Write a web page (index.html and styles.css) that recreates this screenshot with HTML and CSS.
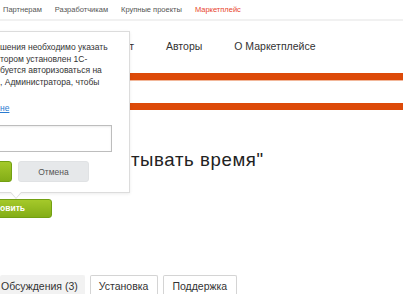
FILE: index.html
```html
<!DOCTYPE html>
<html lang="ru">
<head>
    <meta charset="UTF-8">
    <meta name="viewport" content="width=device-width, initial-scale=1.0">
    <title>Маркетплейс</title>
    <link rel="stylesheet" href="styles.css">
</head>
<body>
    <div class="topbar">
        <a class="topbar-link" href="#">Партнерам</a>
        <a class="topbar-link" href="#">Разработчикам</a>
        <a class="topbar-link" href="#">Крупные проекты</a>
        <a class="topbar-link active" href="#">Маркетплейс</a>
    </div>

    <div class="page">
        <nav class="menu">
            <a class="menu-item menu-item-cut" href="#">Продукт</a>
            <a class="menu-item" href="#">Авторы</a>
            <a class="menu-item" href="#">О Маркетплейсе</a>
        </nav>
        <div class="stripe"></div>
        <div class="stripe stripe-second"></div>

        <h1 class="app-title">тывать время"</h1>

        <div class="install-row">
            <button class="btn-green btn-install">овить</button>
        </div>

        <div class="tabs">
            <a class="tab active" href="#">Обсуждения (3)</a>
            <a class="tab" href="#">Установка</a>
            <a class="tab" href="#">Поддержка</a>
        </div>
    </div>

    <!-- popup over the install button -->
    <div class="popup">
        <p class="popup-text">
            шения необходимо указать<br>
            тором установлен 1С-<br>
            буется авторизоваться на<br>
            , Администратора, чтобы
        </p>
        <a class="popup-link" href="#">не</a>
        <input class="popup-input" type="text">
        <div class="popup-buttons">
            <button class="btn-green btn-save">Сохранить</button>
            <button class="btn-cancel">Отмена</button>
        </div>
    </div>
</body>
</html>
```

FILE: styles.css
```css
body {
    margin: 0;
    width: 403px;
    height: 294px;
    overflow: hidden;
    position: relative;
    background: #fff;
    font-family: "Liberation Sans", Arial, sans-serif;
    color: #333;
}
a {
    text-decoration: none;
}
.topbar {
    display: flex;
    gap: 13px;
    height: 19px;
    align-items: center;
    padding-left: 3px;
    border-bottom: 2px solid #f1f1f1;
}
.topbar-link {
    font-size: 7.5px;
    color: #555;
}
.topbar-link.active {
    color: #e8452c;
}
.menu {
    display: flex;
    gap: 32px;
    padding-top: 19px;
    line-height: 12px;
}
.menu-item {
    font-size: 10.5px;
    color: #333;
}
.menu-item-cut {
    width: 134px;
    text-align: right;
    flex: 0 0 auto;
}
.stripe {
    height: 7px;
    margin-top: 21px;
    background: #dd4a09;
    border-bottom: 1px solid #f2b79a;
}
.stripe-second {
    margin-top: 22px;
    border-bottom: none;
}
.app-title {
    margin: 38px 0 0 131px;
    font-size: 18.6px;
    font-weight: normal;
    line-height: 24px;
    letter-spacing: 0.6px;
    color: #222;
}
.install-row {
    margin-top: 25px;
}
.btn-green {
    border: 1px solid #72a012;
    border-radius: 3px;
    background: linear-gradient(#a5c92a, #83ad17);
    color: #fff;
    font-family: inherit;
    font-weight: bold;
    font-size: 8.5px;
}
.btn-install {
    height: 19px;
    margin-left: -30px;
    padding: 0 26px 0 29px;
}
.tabs {
    display: flex;
    gap: 5px;
    margin-top: 57px;
}
.tab {
    height: 21px;
    line-height: 21px;
    padding: 0 9px 0 8px;
    font-size: 10.5px;
    color: #333;
    border: 1px solid #d4d4d4;
    border-bottom: none;
    border-radius: 2px 2px 0 0;
}
.tab.active {
    padding: 0 6px 0 0;
    background: #f2f2f2;
    border-color: #f2f2f2;
}
.popup {
    position: absolute;
    top: 31px;
    left: -20px;
    width: 129px;
    height: 160px;
    padding: 0 0 0 19px;
    background: #fff;
    border: 1px solid #dcdcdc;
    box-shadow: 0 1px 3px rgba(0,0,0,0.08);
}
.popup::before,
.popup::after {
    content: "";
    position: absolute;
    left: 29px;
    border-style: solid;
    border-color: transparent;
}
.popup::before {
    bottom: -7px;
    border-width: 7px 6px 0;
    border-top-color: #dcdcdc;
}
.popup::after {
    bottom: -6px;
    left: 30px;
    border-width: 6px 5px 0;
    border-top-color: #fff;
}
.popup-text {
    margin: 10px 0 0;
    font-size: 8.5px;
    line-height: 11.5px;
    color: #333;
    white-space: nowrap;
}
.popup-link {
    display: block;
    margin-top: 15px;
    font-size: 8.5px;
    color: #2a7bd0;
    text-decoration: underline;
}
.popup-input {
    display: block;
    box-sizing: border-box;
    width: 132px;
    height: 27px;
    margin: 12px 0 0 -20px;
    border: 1px solid #bdbdbd;
    box-shadow: inset 0 1px 2px rgba(0,0,0,0.08);
}
.popup-buttons {
    display: flex;
    gap: 6px;
    margin: 9px 0 0 -60px;
}
.btn-save {
    height: 21px;
    width: 72px;
}
.btn-cancel {
    height: 21px;
    width: 71px;
    border: 1px solid #e0e2e4;
    border-radius: 3px;
    background: #e6e8ea;
    color: #555;
    font-family: inherit;
    font-size: 8.5px;
}
```
